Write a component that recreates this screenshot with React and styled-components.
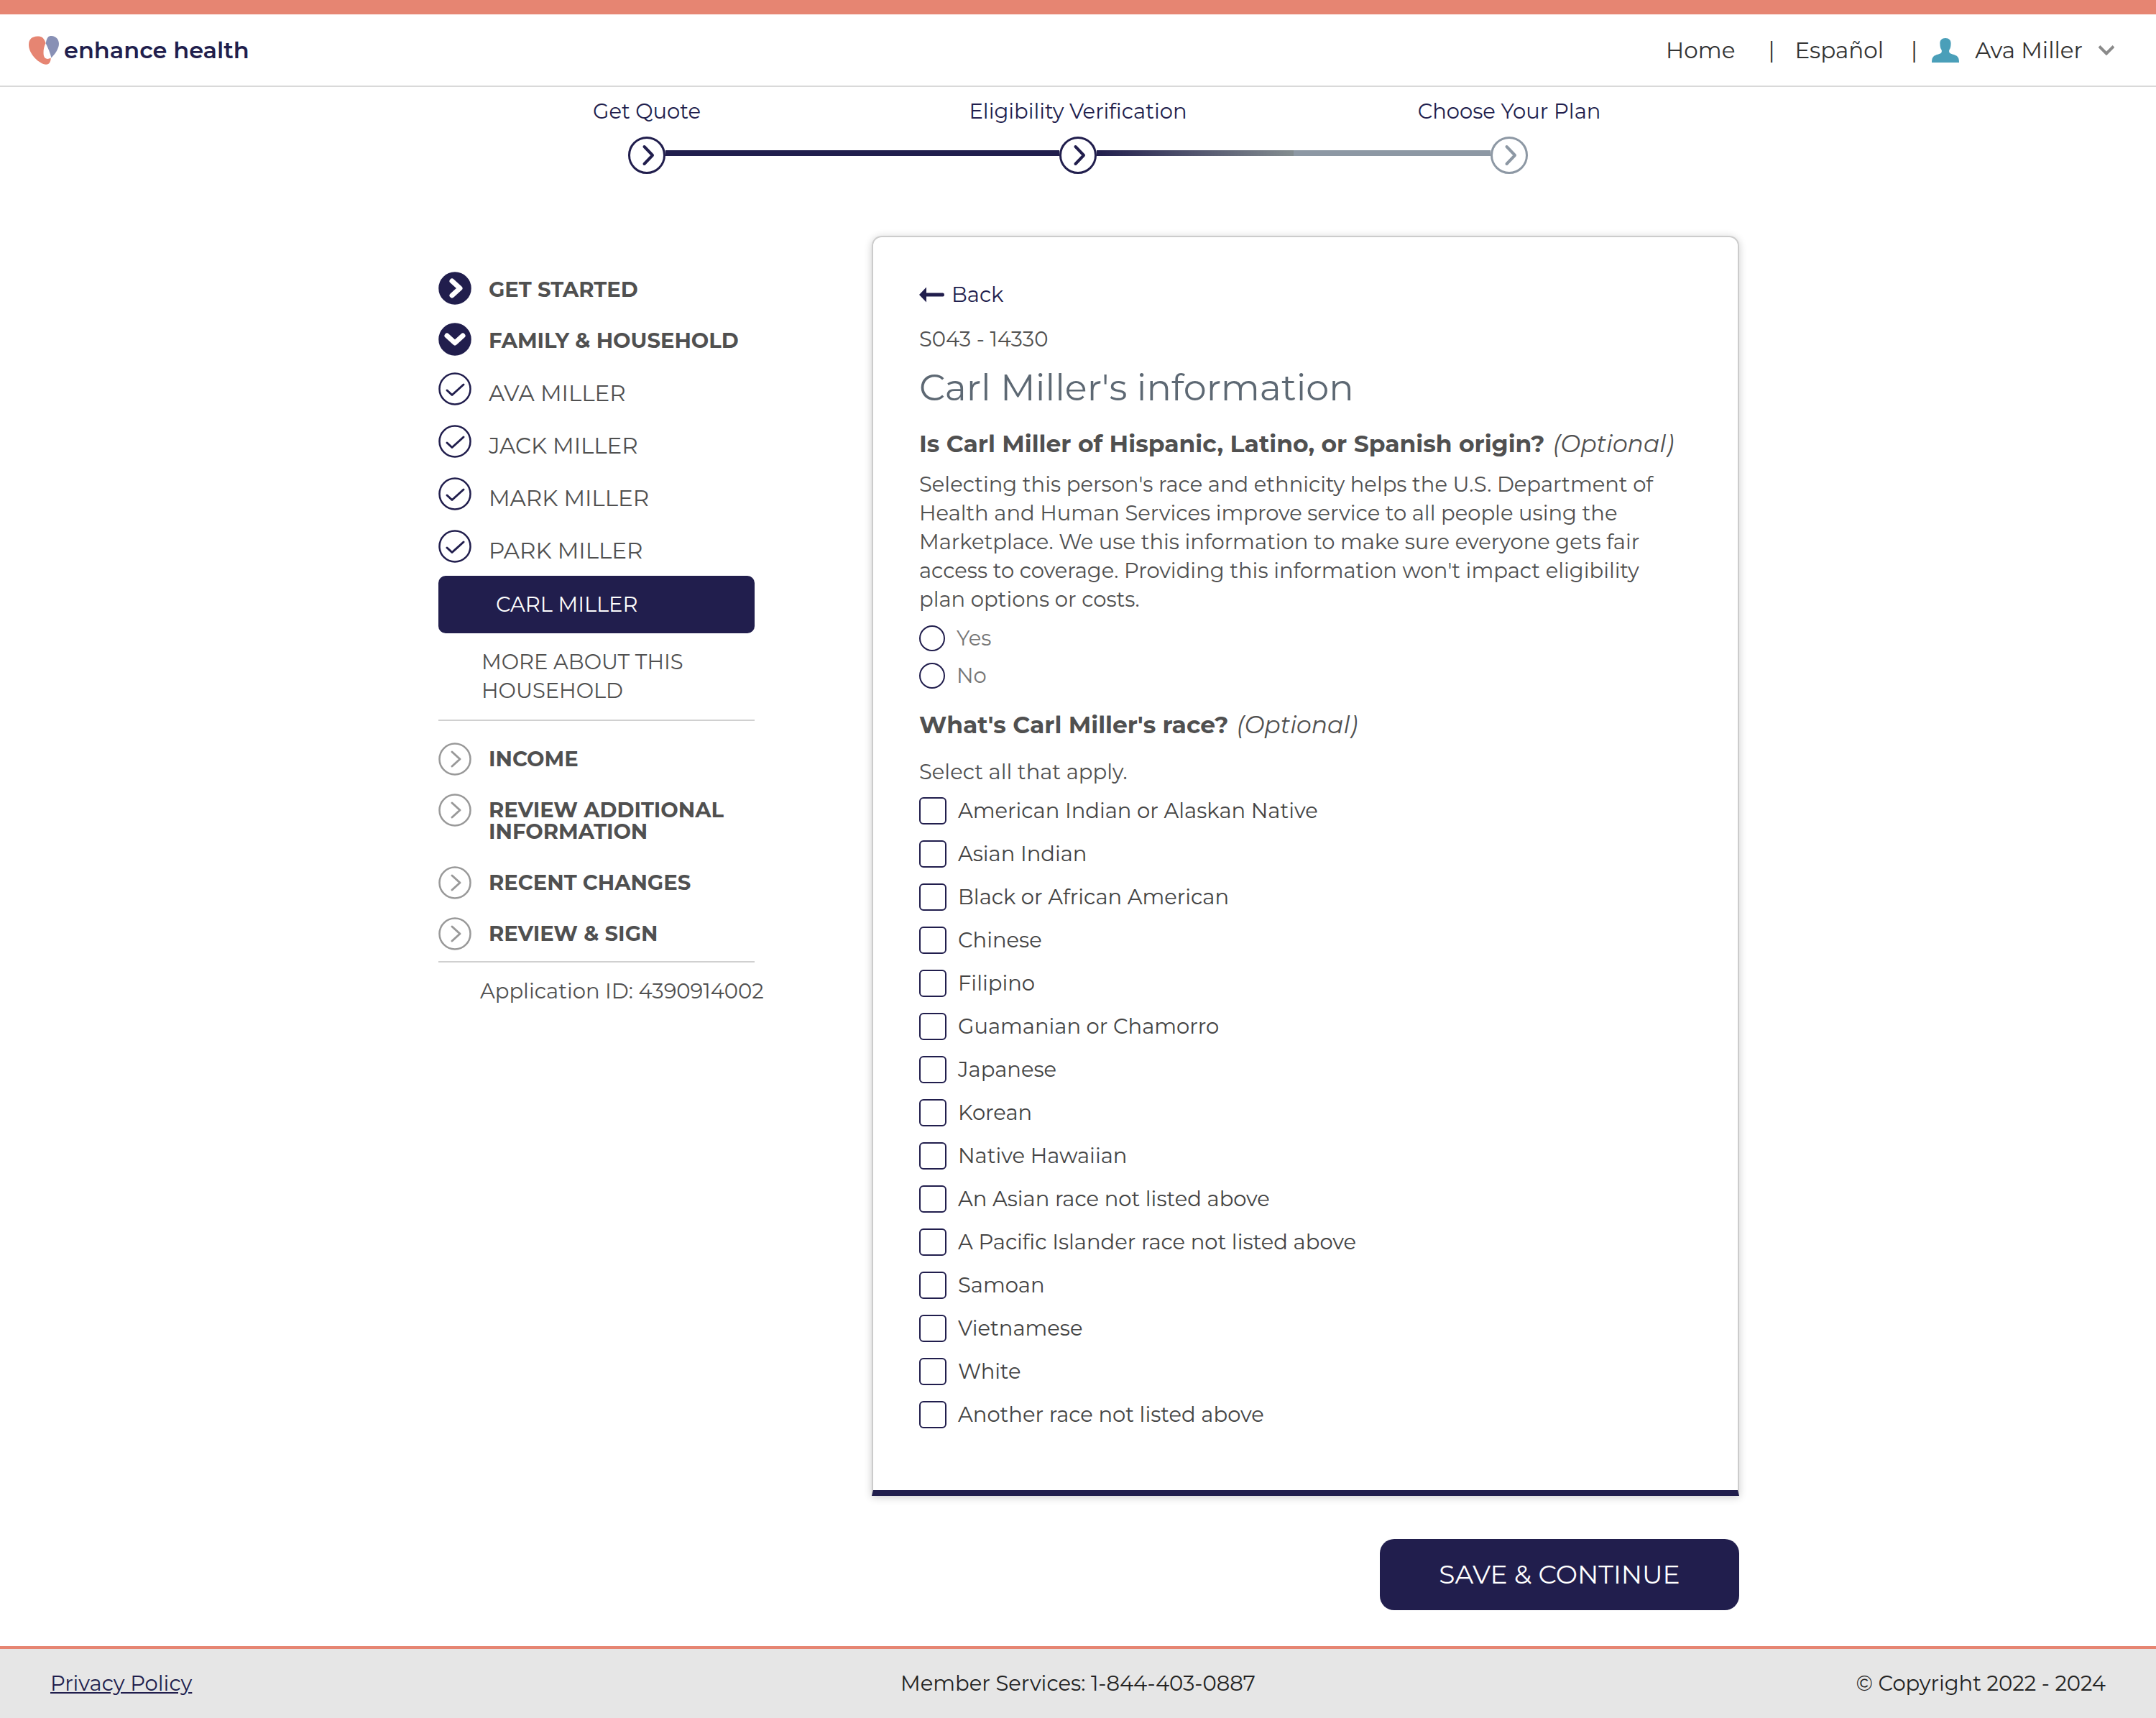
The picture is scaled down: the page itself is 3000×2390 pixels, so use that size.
import React from "react";
import styled, { createGlobalStyle, css } from "styled-components";

const navy = "#211e4d";
const coral = "#e68572";
const grey = "#8d98a4";
const ink = "#505050";

const GlobalStyle = createGlobalStyle`
  *, *::before, *::after { box-sizing: border-box; }
  body {
    margin: 0;
    background: #fff;
    color: ${ink};
    font-family: Montserrat, Inter, "Open Sans", sans-serif;
    font-size: 29px;
    line-height: 40px;
  }
  h1, h2, p, ul, fieldset, legend { margin: 0; padding: 0; }
  ul { list-style: none; }
  fieldset { border: 0; min-width: 0; }
  a { color: inherit; text-decoration: none; }
  button { font: inherit; color: inherit; border: 0; background: none; padding: 0; cursor: pointer; }
  svg { display: block; flex: none; }
`;

const Page = styled.div`
  display: flex;
  flex-direction: column;
  min-height: 100vh;
`;

const Header = styled.header`
  display: flex;
  align-items: center;
  justify-content: space-between;
  padding: 30px 58px 29px 40px;
  border-top: 20px solid ${coral};
  border-bottom: 2px solid #d9d9d9;
`;

const Brand = styled.a`
  display: flex;
  align-items: center;
  gap: 7px;
  color: ${navy};
  font-size: 32px;
  font-weight: 600;
`;

const Nav = styled.nav`
  display: flex;
  align-items: center;
  color: #333;
  font-size: 31px;
`;

const Divider = styled.span`
  margin: 0 ${(p) => p.$after}px 0 ${(p) => p.$before}px;
`;

const UserMenu = styled.button`
  display: flex;
  align-items: center;
  gap: 22px;
`;

const Stepper = styled.ol`
  display: grid;
  grid-template-columns: repeat(3, 1fr);
  width: 60%;
  margin: 0 auto;
  padding: 14px 0 0;
  list-style: none;
`;

const Step = styled.li`
  display: flex;
  flex-direction: column;
  gap: 15px;
  color: ${navy};
  text-align: center;
`;

const Track = styled.div`
  display: flex;
  align-items: center;
`;

const Segment = styled.span`
  flex: 1;
  height: 8px;
  margin-bottom: 6px;
  background: ${(p) => p.$fill};
`;

const Main = styled.main`
  display: flex;
  flex: 1;
  align-items: flex-start;
  gap: 163px;
  width: 100%;
  max-width: 1840px;
  margin: 0 auto;
  padding: 86px 0 46px 30px;
`;

const Sidebar = styled.aside`
  flex: 0 0 440px;
  min-width: 0;
  padding-top: 50px;
`;

const SectionList = styled.ul`
  display: flex;
  flex-direction: column;
  gap: 25px;
`;

const MemberList = styled.ul`
  display: flex;
  flex-direction: column;
  gap: 24px;
  padding: 23px 0 15px;
`;

const SidebarLink = styled.a`
  display: flex;
  align-items: flex-start;
  gap: 24px;
`;

const SectionLabel = styled.span`
  padding: 10px 0 6px;
  font-weight: 700;
  line-height: 30px;
`;

const UpcomingLabel = styled(SectionLabel)`
  padding: 8px 0;
`;

const MemberLabel = styled.span`
  padding-top: 9px;
  font-size: 31px;
`;

const ActiveLink = styled.a`
  display: block;
  padding: 20px 20px 20px 80px;
  border-radius: 10px;
  background: ${navy};
  color: #fff;
`;

const MoreLink = styled.a`
  display: block;
  padding: 20px 60px;
`;

const Rule = styled.hr`
  height: 2px;
  margin: 0;
  border: 0;
  background: #d0d0d0;
`;

const UpcomingList = styled(SectionList)`
  padding: 30px 0 15px;
`;

const ApplicationId = styled.p`
  padding: 20px 0 0 58px;
  white-space: nowrap;
`;

const Content = styled.div`
  display: flex;
  flex: 1;
  flex-direction: column;
  gap: 60px;
  min-width: 0;
`;

const Card = styled.section`
  padding: 60px 64px 86px;
  border: 2px solid #ccc;
  border-bottom: 8px solid ${navy};
  border-radius: 14px 14px 0 0;
  box-shadow: 0 2px 12px rgba(0, 0, 0, 0.2);
`;

const BackLink = styled.a`
  display: flex;
  align-items: center;
  gap: 10px;
  width: fit-content;
  color: ${navy};
`;

const ScreenCode = styled.p`
  padding-top: 22px;
`;

const Title = styled.h1`
  padding: 17px 0 28px;
  color: #5d6873;
  font-size: 51px;
  font-weight: 400;
  line-height: 60px;
`;

const Question = styled.legend`
  font-size: 33px;
  font-weight: 700;
`;

const Optional = styled.em`
  margin-left: 2px;
  font-weight: 400;
`;

const Help = styled.p`
  padding: ${(p) => p.$top}px 0 0;
  max-width: 1060px;
`;

const Options = styled.div`
  display: flex;
  flex-direction: column;
  align-items: flex-start;
  gap: ${(p) => p.$gap}px;
  padding: ${(p) => p.$top}px 0 ${(p) => p.$bottom || 0}px;
`;

const Option = styled.label`
  display: flex;
  align-items: center;
  gap: 16px;
  cursor: pointer;
`;

const RadioOption = styled(Option)`
  color: #767676;
  line-height: 36px;
`;

const CheckOption = styled(Option)`
  color: #444;
  line-height: 38px;
`;

const control = css`
  flex: none;
  margin: 0;
  appearance: none;
  border: 2px solid ${navy};
  background: #fff;
  &:checked { background: ${navy}; box-shadow: inset 0 0 0 6px #fff; }
`;

const Radio = styled.input`
  ${control}
  width: 36px;
  height: 36px;
  border-radius: 50%;
`;

const Checkbox = styled.input`
  ${control}
  width: 38px;
  height: 38px;
  border-radius: 6px;
`;

const SaveButton = styled.button`
  align-self: flex-end;
  width: 500px;
  max-width: 100%;
  padding: 29px 20px 30px;
  border-radius: 20px;
  background: ${navy};
  color: #fff;
  font-size: 36px;
`;

const Footer = styled.footer`
  display: grid;
  grid-template-columns: 1fr auto 1fr;
  padding: 28px 70px;
  border-top: 4px solid ${coral};
  background: #e6e6e6;
  color: #222;
`;

const PolicyLink = styled.a`
  justify-self: start;
  color: ${navy};
  text-decoration: underline;
`;

const Copyright = styled.span`
  justify-self: end;
`;

const HeartLogo = () => (
  <svg width="42" height="40" viewBox="0 0 42 40" aria-hidden="true">
    <path fill={coral} d="M12 0.6C18 -0.6 22 4 23.6 10C21 15 20 21 20.8 27C21.6 31.6 26 33.4 30.6 30.6C31 36 28 40 24 39.8C15 39 0.5 26 0 13C-0.2 5 4 1 12 0.6Z" />
    <path fill="#8890b5" d="M30 0C37 -0.4 42 4 42 11C42 18 36 26 31.4 30.4C30 24 27 17 23.8 10.4C24.6 5 26 0.6 30 0Z" />
  </svg>
);

const UserIcon = () => (
  <svg width="38" height="34" viewBox="0 0 38 34" aria-hidden="true">
    <path fill="#4a9fb9" d="M19 0c5 0 8 3 7.6 8C26.400 12 26 14 24.600 16c-.6 1-.8 3 .2 4.400C27 22.400 32 22.600 35 25c2.400 2 3 4.600 3 9H0c0-4.400.6-7 3-9 3-2.400 8-2.600 10.200-4.600 1-1.400.8-3.400.2-4.400C12 14 11.600 12 11.400 8 11 3 14 0 19 0Z" />
  </svg>
);

const ChevronDown = () => (
  <svg width="22" height="14" viewBox="0 0 22 14" fill="none" stroke="#8a8a8a" strokeWidth="4" aria-hidden="true">
    <path d="M1 1.500L11 11.500L21 1.500" />
  </svg>
);

const StepIcon = ({ color }) => (
  <svg width="52" height="52" viewBox="0 0 52 52" fill="none" stroke={color} aria-hidden="true">
    <circle cx="26" cy="26" r="24.500" strokeWidth="3" />
    <path d="M22.500 14L34 26L22.500 38" strokeWidth="4" strokeLinecap="round" strokeLinejoin="round" />
  </svg>
);

const marks = {
  right: "M19 13L30 23L19 33",
  down: "M12 18L23 28L34 18",
  check: "M12 25L19 31.500L35 17",
};

const StatusIcon = ({ mark, solid, color = navy }) => (
  <svg width="46" height="46" viewBox="0 0 46 46" fill="none" aria-hidden="true">
    <circle cx="23" cy="23" r="21.500" stroke={color} strokeWidth="2.500" fill={solid ? color : "none"} />
    <path
      d={marks[mark]}
      stroke={solid ? "#fff" : color}
      strokeWidth={solid ? 7 : 3}
      strokeLinecap="round"
      strokeLinejoin="round"
    />
  </svg>
);

const BackArrow = () => (
  <svg width="35" height="22" viewBox="0 0 35 22" fill={navy} aria-hidden="true">
    <path d="M0 11L10 0.500V8.500H33Q35 8.500 35 11T33 13.500H10V21.500Z" />
  </svg>
);

const steps = [
  { label: "Get Quote", color: navy, before: "transparent", after: navy },
  {
    label: "Eligibility Verification",
    color: navy,
    before: navy,
    after: `linear-gradient(to right, ${navy}, #848d90)`,
  },
  { label: "Choose Your Plan", color: grey, before: grey, after: "transparent" },
];

const members = ["AVA MILLER", "JACK MILLER", "MARK MILLER", "PARK MILLER"];
const upcoming = ["INCOME", "REVIEW ADDITIONAL INFORMATION", "RECENT CHANGES", "REVIEW & SIGN"];

const races = [
  "American Indian or Alaskan Native",
  "Asian Indian",
  "Black or African American",
  "Chinese",
  "Filipino",
  "Guamanian or Chamorro",
  "Japanese",
  "Korean",
  "Native Hawaiian",
  "An Asian race not listed above",
  "A Pacific Islander race not listed above",
  "Samoan",
  "Vietnamese",
  "White",
  "Another race not listed above",
];

export default function App() {
  return (
    <Page>
      <GlobalStyle />
      <Header>
        <Brand href="#">
          <HeartLogo />
          enhance health
        </Brand>
        <Nav>
          <a href="#">Home</a>
          <Divider $before={46} $after={28}>|</Divider>
          <a href="#">Español</a>
          <Divider $before={38} $after={20}>|</Divider>
          <UserMenu type="button">
            <UserIcon />
            Ava Miller
            <ChevronDown />
          </UserMenu>
        </Nav>
      </Header>

      <Stepper>
        {steps.map((step) => (
          <Step key={step.label}>
            {step.label}
            <Track>
              <Segment $fill={step.before} />
              <StepIcon color={step.color} />
              <Segment $fill={step.after} />
            </Track>
          </Step>
        ))}
      </Stepper>

      <Main>
        <Sidebar>
          <SectionList>
            <li>
              <SidebarLink href="#">
                <StatusIcon mark="right" solid />
                <SectionLabel>GET STARTED</SectionLabel>
              </SidebarLink>
            </li>
            <li>
              <SidebarLink href="#">
                <StatusIcon mark="down" solid />
                <SectionLabel>FAMILY &amp; HOUSEHOLD</SectionLabel>
              </SidebarLink>
            </li>
          </SectionList>
          <MemberList>
            {members.map((name) => (
              <li key={name}>
                <SidebarLink href="#">
                  <StatusIcon mark="check" />
                  <MemberLabel>{name}</MemberLabel>
                </SidebarLink>
              </li>
            ))}
          </MemberList>
          <ActiveLink href="#" aria-current="page">CARL MILLER</ActiveLink>
          <MoreLink href="#">MORE ABOUT THIS HOUSEHOLD</MoreLink>
          <Rule />
          <UpcomingList>
            {upcoming.map((label) => (
              <li key={label}>
                <SidebarLink href="#">
                  <StatusIcon mark="right" color="#999" />
                  <UpcomingLabel>{label}</UpcomingLabel>
                </SidebarLink>
              </li>
            ))}
          </UpcomingList>
          <Rule />
          <ApplicationId>Application ID: 4390914002</ApplicationId>
        </Sidebar>

        <Content>
          <Card>
            <BackLink href="#">
              <BackArrow />
              Back
            </BackLink>
            <ScreenCode>S043 - 14330</ScreenCode>
            <Title>Carl Miller's information</Title>
            <fieldset>
              <Question>
                Is Carl Miller of Hispanic, Latino, or Spanish origin? <Optional>(Optional)</Optional>
              </Question>
              <Help $top={17}>
                Selecting this person's race and ethnicity helps the U.S. Department of Health and Human
                Services improve service to all people using the Marketplace. We use this information to
                make sure everyone gets fair access to coverage. Providing this information won't impact
                eligibility plan options or costs.
              </Help>
              <Options $gap={16} $top={16} $bottom={30}>
                {["Yes", "No"].map((answer) => (
                  <RadioOption key={answer}>
                    <Radio type="radio" name="hispanic-origin" value={answer} />
                    {answer}
                  </RadioOption>
                ))}
              </Options>
            </fieldset>
            <fieldset>
              <Question>
                What's Carl Miller's race? <Optional>(Optional)</Optional>
              </Question>
              <Help $top={26}>Select all that apply.</Help>
              <Options $gap={22} $top={15}>
                {races.map((race) => (
                  <CheckOption key={race}>
                    <Checkbox type="checkbox" name="race" value={race} />
                    {race}
                  </CheckOption>
                ))}
              </Options>
            </fieldset>
          </Card>
          <SaveButton type="submit">SAVE &amp; CONTINUE</SaveButton>
        </Content>
      </Main>

      <Footer>
        <PolicyLink href="#">Privacy Policy</PolicyLink>
        <span>Member Services: 1-844-403-0887</span>
        <Copyright>© Copyright 2022 - 2024</Copyright>
      </Footer>
    </Page>
  );
}
